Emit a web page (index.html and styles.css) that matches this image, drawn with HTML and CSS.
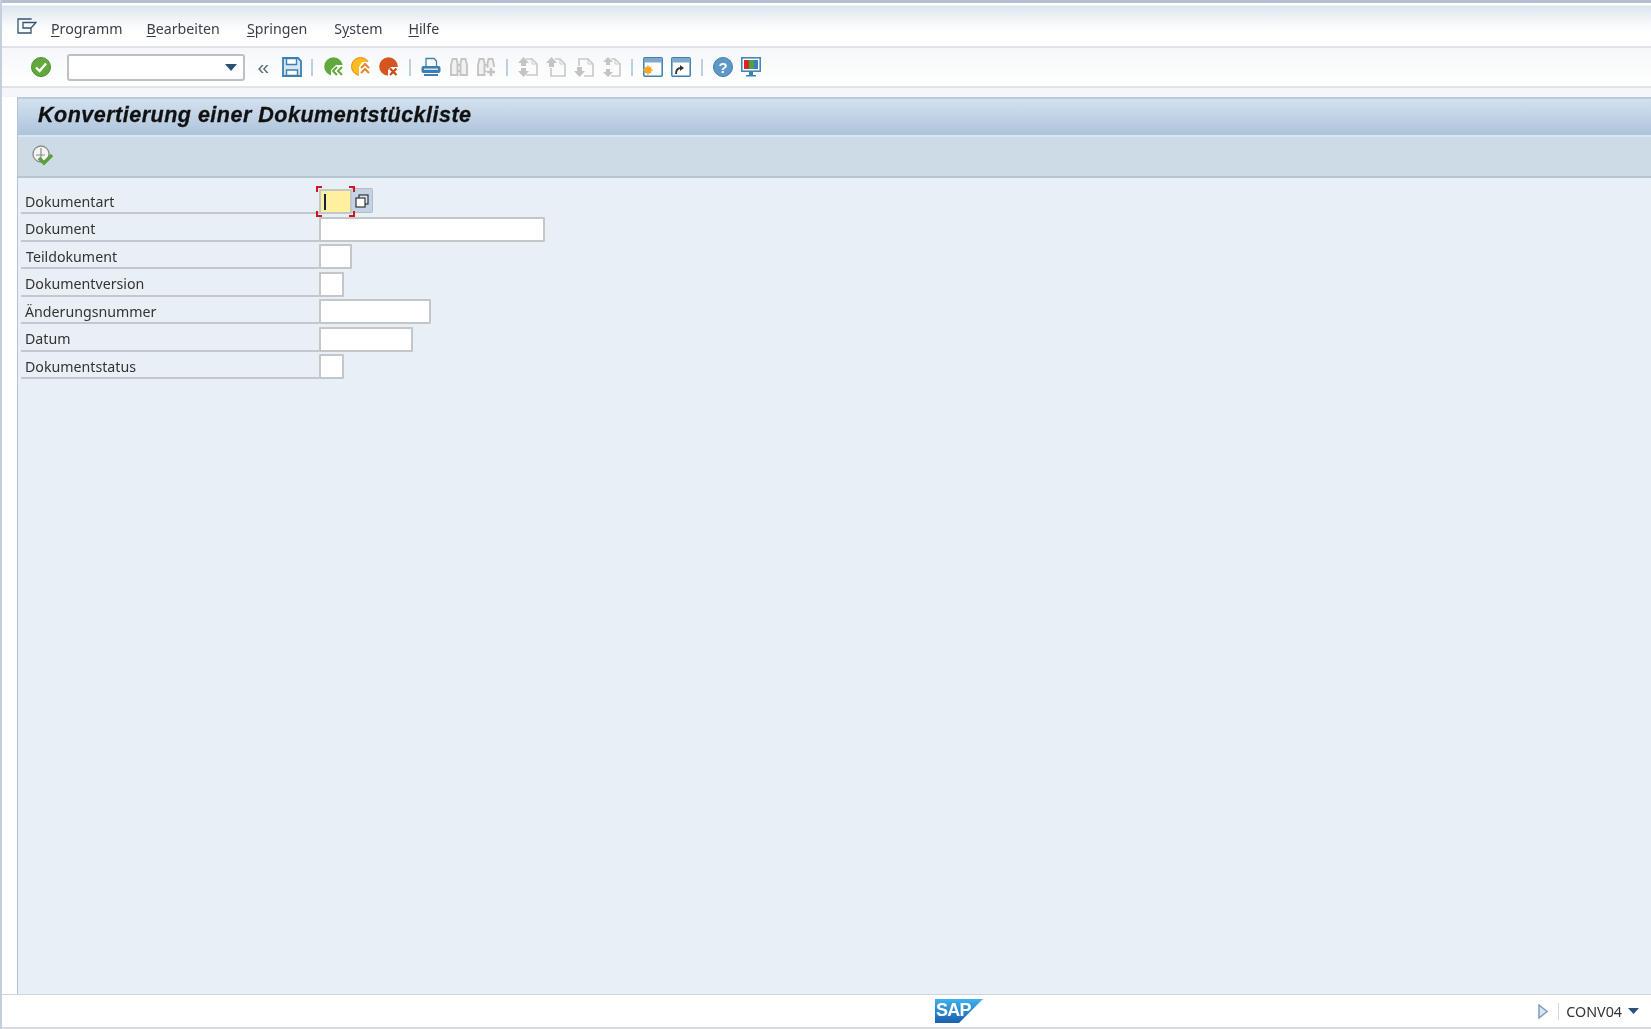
FILE: index.html
```html
<!DOCTYPE html>
<html lang="de">
<head>
<meta charset="utf-8">
<title>Konvertierung einer Dokumentstückliste</title>
<link rel="stylesheet" href="styles.css">
</head>
<body>
<div class="window">
  <header class="menubar">
    <svg class="menu-icon" width="20" height="16" viewBox="0 0 20 16"><path d="M14 1.700V1H1v14h13v-4.500M6 4.500h13l-5 5.500H6z" fill="none" stroke="#35566f" stroke-width="1.300"/></svg>
    <nav class="menu">
      <span class="m1"><u>P</u>rogramm</span>
      <span class="m2"><u>B</u>earbeiten</span>
      <span class="m3"><u>S</u>pringen</span>
      <span class="m4">S<u>y</u>stem</span>
      <span class="m5"><u>H</u>ilfe</span>
    </nav>
  </header>

  <div class="toolbar">
    <svg class="tool" viewBox="0 0 20 20"><circle cx="10" cy="10" r="9.500" fill="#62a83c" stroke="#4c8f30"/><path d="M5 10.500l3.600 3.600L15 6.500" fill="none" stroke="#fff" stroke-width="2.400"/></svg>
    <div class="combo"><svg class="combo-arrow" width="12" height="7" viewBox="0 0 12 7"><path d="M0 0h12L6 7z" fill="#2c4f78"/></svg></div>
    <span class="chev">«</span>
    <svg class="tool" viewBox="0 0 20 20"><path d="M1 1h15l3 3v15H1z" fill="#d6e6f3" stroke="#3d7fb1" stroke-width="1.800"/><path d="M4.500 1.500h10v6h-10z" fill="#fff" stroke="#3d7fb1" stroke-width="1.400"/><path d="M4.500 13h11v5.500h-11z" fill="#fff" stroke="#3d7fb1" stroke-width="1.400"/></svg>
    <i class="sep"></i>
    <svg class="tool" viewBox="0 0 20 20"><circle cx="9.500" cy="9.500" r="9.300" fill="#62a83c"/><path d="M7 20V13l5-5h8v12z" fill="#fff"/><path d="M13 10l-4 4 4 4M18 10l-4 4 4 4" fill="none" stroke="#62a83c" stroke-width="2"/></svg>
    <svg class="tool" viewBox="0 0 20 20"><circle cx="9.500" cy="9.500" r="9" fill="#fbbd1c" stroke="#e8852a"/><path d="M8 20V10l3-5h9v15z" fill="#fff"/><path d="M10 11l4-4 4 4M10 16l4-4 4 4" fill="none" stroke="#e8852a" stroke-width="2"/></svg>
    <svg class="tool" viewBox="0 0 20 20"><circle cx="9.500" cy="9.500" r="9.300" fill="#d4551d"/><path d="M9 20v-7l3-3h8v10z" fill="#fff"/><path d="M11 11.500l6.500 6.500M17.500 11.500L11 18" fill="none" stroke="#c9491a" stroke-width="2.200"/></svg>
    <i class="sep"></i>
    <svg class="tool" viewBox="0 0 20 20"><path d="M5 9V1.500h8l2.500 2.500v5" fill="#fff" stroke="#3d7fb1" stroke-width="1.300"/><rect x="0.500" y="9" width="19" height="7" rx="2" fill="#3d7fb1"/><rect x="3" y="11.500" width="14" height="1.500" fill="#cfe2f1"/><rect x="3" y="17" width="14" height="2" fill="#3d7fb1"/></svg>
    <svg class="tool disabled" viewBox="0 0 20 20"><path d="M2 18V8l1.500-6h4L8.500 6v12zM11.500 18V6l1-4h4L18 8v10zM8.500 8h3M8.500 14h3" fill="#f1f1f1" stroke="#c4c4c4" stroke-width="1.900"/></svg>
    <svg class="tool disabled" viewBox="0 0 20 20"><path d="M2 18V8l1.500-6h4L8.500 6v12zM11.500 11V6l1-4h4L18 8v2M8.500 8h3M8.500 14h2" fill="#f1f1f1" stroke="#c4c4c4" stroke-width="1.900"/><path d="M15 11v8M11 15h8" stroke="#c4c4c4" stroke-width="2.600"/></svg>
    <i class="sep"></i>
    <svg class="tool disabled" viewBox="0 0 20 20"><path d="M8 2h6l5 5v11H8" fill="none" stroke="#c9c9c9" stroke-width="1.600"/><path d="M14 2v5h5" fill="none" stroke="#c9c9c9"/><path d="M5.500 0L11 6H8v3H3V6H0zM5.500 20L11 14H8v-3H3v3H0z" fill="#c4c4c4"/></svg>
    <svg class="tool disabled" viewBox="0 0 20 20"><path d="M9 2h5l5 5v12H5v-8" fill="none" stroke="#c9c9c9" stroke-width="1.600"/><path d="M14 2v5h5" fill="none" stroke="#c9c9c9"/><path d="M5.500 0L11 6H8v4H3V6H0z" fill="#c4c4c4"/></svg>
    <svg class="tool disabled" viewBox="0 0 20 20"><path d="M5 9V2h9l5 5v12h-9" fill="none" stroke="#c9c9c9" stroke-width="1.600"/><path d="M14 2v5h5" fill="none" stroke="#c9c9c9"/><path d="M5.500 20L11 14H8v-4H3v4H0z" fill="#c4c4c4"/></svg>
    <svg class="tool disabled" viewBox="0 0 20 20"><path d="M10 2h4l5 5v12h-9" fill="none" stroke="#c9c9c9" stroke-width="1.600"/><path d="M14 2v5h5" fill="none" stroke="#c9c9c9"/><path d="M7 0L12 5H9v3H5V5H2zM7 20L12 15H9v-3H5v3H2z" fill="#c4c4c4"/></svg>
    <i class="sep"></i>
    <svg class="tool" viewBox="0 0 20 20"><rect x="0.800" y="0.800" width="18.400" height="18.400" rx="1" fill="#fff" stroke="#3d7fb1" stroke-width="1.500"/><rect x="1" y="1" width="18" height="4.500" fill="#7fa9cc"/><circle cx="5" cy="13" r="3.500" fill="#f5a623"/><path d="M5 8v10M0 13h10M1.500 9.500l7 7M8.500 9.500l-7 7" stroke="#f5a623"/></svg>
    <svg class="tool" viewBox="0 0 20 20"><rect x="0.800" y="0.800" width="18.400" height="18.400" rx="1" fill="#fff" stroke="#3d7fb1" stroke-width="1.500"/><rect x="1" y="1" width="18" height="4.500" fill="#7fa9cc"/><path d="M5 17c0-4 1-6 5-6" fill="none" stroke="#333" stroke-width="1.800"/><path d="M9 8l4 3-4 3z" fill="#333"/></svg>
    <i class="sep"></i>
    <svg class="tool" viewBox="0 0 20 20"><circle cx="10" cy="10" r="9.500" fill="#5e97c6" stroke="#3d7fb1"/><text class="help-mark" x="10" y="15.500" text-anchor="middle">?</text></svg>
    <svg class="tool" viewBox="0 0 20 20"><rect x="0.800" y="0.800" width="18.400" height="13.400" fill="#fff" stroke="#3d7fb1" stroke-width="1.500"/><rect x="3" y="3" width="5" height="9" fill="#d8262c"/><rect x="8" y="3" width="5" height="9" fill="#4aa53c"/><rect x="13" y="3" width="4" height="9" fill="#3a7fc1"/><path d="M8 15h4v3h3v1.500H5V18h3z" fill="#3d7fb1"/></svg>
  </div>

  <div class="toolbar-gap"></div>

  <div class="body-row">
    <main class="screen">
      <h1 class="title">Konvertierung einer Dokumentstückliste</h1>
      <div class="app-bar">
        <svg width="22" height="22" viewBox="0 0 22 22"><circle cx="9" cy="9" r="8" fill="#f4f4f4" stroke="#8a8a8a" stroke-width="1.300"/><path d="M9 3v12M4 10h9" stroke="#8a8a8a" stroke-width="1.200"/><path d="M7 13l5 5 8-8" fill="none" stroke="#5aa03a" stroke-width="3.400"/></svg>
      </div>
      <form class="form">
        <div class="row">
          <label class="label">Dokumentart</label>
          <span class="focus-field">
            <input class="field active w-short" type="text" aria-label="Dokumentart" readonly>
            <i class="caret"></i>
            <i class="corner tl"></i><i class="corner tr"></i><i class="corner bl"></i><i class="corner br"></i>
          </span>
          <button class="f4" type="button" aria-label="Werthilfe"><svg width="14" height="14" viewBox="0 0 14 14"><rect x="4" y="1" width="9" height="9" fill="#dfe7ef" stroke="#333" stroke-width="1.200"/><rect x="1" y="4" width="9" height="9" fill="#fff" stroke="#333" stroke-width="1.200"/></svg></button>
        </div>
        <div class="row"><label class="label">Dokument</label><input class="field w-doc" type="text" aria-label="Dokument"></div>
        <div class="row"><label class="label nudge">Teildokument</label><input class="field w-short" type="text" aria-label="Teildokument"></div>
        <div class="row"><label class="label">Dokumentversion</label><input class="field w-tiny" type="text" aria-label="Dokumentversion"></div>
        <div class="row"><label class="label">Änderungsnummer</label><input class="field w-num" type="text" aria-label="Änderungsnummer"></div>
        <div class="row"><label class="label">Datum</label><input class="field w-date" type="text" aria-label="Datum"></div>
        <div class="row"><label class="label">Dokumentstatus</label><input class="field w-tiny" type="text" aria-label="Dokumentstatus"></div>
      </form>
    </main>
  </div>

  <footer class="status">
    <svg class="sap" width="48" height="24" viewBox="0 0 48 24"><defs><linearGradient id="sapg" x1="0" y1="0" x2="0" y2="1"><stop offset="0" stop-color="#3db2ee"/><stop offset="1" stop-color="#1a5fb0"/></linearGradient></defs><path d="M0 0h48L24 24H0z" fill="url(#sapg)"/><text class="sap-text" x="1" y="17">SAP</text></svg>
    <div class="status-right">
      <svg width="10" height="15" viewBox="0 0 10 15"><path d="M1 1l8 6.500L1 14z" fill="#dbe6f1" stroke="#7e9fbd" stroke-width="1.500"/></svg>
      <i class="status-sep"></i>
      <span class="tcode">CONV04</span>
      <svg width="11" height="6" viewBox="0 0 11 6"><path d="M0 0h11L5.500 6z" fill="#2c4f78"/></svg>
    </div>
  </footer>
</div>
</body>
</html>
```

FILE: styles.css
```css
* { box-sizing: border-box; }
html, body { margin: 0; height: 100%; overflow: hidden; }
body { background: #fff; font-family: "Noto Sans", "Liberation Sans", sans-serif; color: #222; }
.window {
  height: 1029px;
  display: flex;
  flex-direction: column;
  border-left: 2px solid #c3cfdc;
  filter: blur(0.4px);
}
.menubar {
  height: 48px;
  flex: none;
  display: flex;
  align-items: flex-start;
  border-top: 3px solid #b4c0cf;
  border-bottom: 2px solid #e0e3e8;
  background: linear-gradient(#fff 0, #fff 2px, #dce5ef 3px, #f8fafc 22px, #fff 32px);
  padding: 15px 0 0 15px;
}
.menu { display: flex; margin-left: 14px; margin-top: 1px; font-size: 14.200px; line-height: 20px; color: #3a3f46; }
.menu span { margin-right: 26px; }
.menu .m1 { margin-right: 24px; }
.menu .m2, .menu .m3 { margin-right: 27px; }
.menu u { text-underline-offset: 2px; }
.toolbar {
  height: 40px;
  flex: none;
  display: flex;
  align-items: center;
  gap: 7.700px;
  padding-left: 29px;
  background: linear-gradient(#f5f7fa, #fff);
  border-bottom: 2px solid #e0e3e8;
}
.tool { width: 20px; height: 20px; flex: none; }
.help-mark { font: bold 15px "Liberation Sans", sans-serif; fill: #fff; }
.sep { width: 6.600px; height: 17px; flex: none; background: linear-gradient(90deg, transparent 2.300px, #bcd0e2 2.300px, #bcd0e2 4.300px, transparent 4.300px); }
.combo {
  width: 178px;
  height: 27px;
  margin-left: 8px;
  flex: none;
  position: relative;
  background: #fff;
  border: 2px solid #bcc0c5;
  border-radius: 3px;
}
.combo-arrow { position: absolute; right: 6px; top: 8px; }
.chev { width: 20px; margin-left: 1px; margin-right: 0.600px; text-align: center; font: 21px/20px "Liberation Sans", sans-serif; color: #5d6b7a; }
.toolbar-gap { height: 9px; flex: none; background: #f4f6f9; }
.body-row { flex: 1; min-height: 0; display: flex; padding-left: 15px; }
.screen {
  flex: 1;
  min-width: 0;
  background: #e8f0f6;
  border-left: 1px solid #b5c5d2;
  display: flex;
  flex-direction: column;
}
.title {
  height: 40px;
  flex: none;
  margin: 0;
  padding: 0 0 4px 20px;
  display: flex;
  align-items: center;
  font: italic bold 21.500px "Liberation Sans", sans-serif;
  letter-spacing: 0.500px;
  -webkit-text-stroke: 0.300px #111;
  color: #111;
  border-top: 2px solid #bcc9d7;
  border-bottom: 2px solid #d9e5ef;
  background: linear-gradient(#d2e1ef, #aec4db);
}
.app-bar {
  height: 41px;
  flex: none;
  display: flex;
  align-items: center;
  padding-left: 14px;
  padding-bottom: 1px;
  background: #cddbe6;
  border-bottom: 2px solid #b5c5d2;
}
.form { display: grid; grid-auto-rows: 27.450px; padding: 9px 0 0 3px; }
.row { display: flex; align-items: flex-end; position: relative; }
.label {
  width: 298px;
  height: 27.450px;
  flex: none;
  padding: 6px 0 0 4px;
  font-size: 14.200px;
  line-height: 18px;
  color: #333;
  border-bottom: 2px solid #c3c8ce;
}
.nudge { padding-left: 5px; }
.field {
  display: block;
  height: 25px;
  padding: 0;
  background: #fff;
  border: 2px solid #c3c6ca;
  border-radius: 1px;
  outline: none;
}
.w-short { width: 33px; }
.w-tiny { width: 25px; }
.w-date { width: 94px; }
.w-num { width: 112px; }
.w-doc { width: 226px; }
.focus-field { position: relative; display: block; }
.field.active { background: #fff0a0; }
.caret { position: absolute; left: 5px; top: 5px; width: 2px; height: 16px; background: #14213d; }
.corner { position: absolute; width: 6px; height: 6px; border: 0 solid #d0161e; }
.tl { left: -3px; top: -3px; border-width: 2px 0 0 2px; }
.tr { right: -3px; top: -3px; border-width: 2px 2px 0 0; }
.bl { left: -3px; bottom: -3px; border-width: 0 0 2px 2px; }
.br { right: -3px; bottom: -3px; border-width: 0 2px 2px 0; }
.f4 {
  width: 21px;
  height: 25px;
  padding: 0;
  margin-left: 0;
  margin-bottom: 1px;
  display: flex;
  align-items: center;
  justify-content: center;
  background: #c3d2e4;
  border: 1px solid #b4bcc6;
  border-left: 0;
  border-radius: 0 2px 2px 0;
}
.status {
  height: 35px;
  flex: none;
  display: flex;
  align-items: center;
  position: relative;
  background: #fff;
  border-top: 1px solid #cdd5dd;
  border-bottom: 2px solid #d8dadd;
}
.sap { position: absolute; left: 933px; top: 4px; }
.sap-text { font: bold 18px "Liberation Sans", sans-serif; letter-spacing: -0.800px; fill: #fff; }
.status-right { margin-left: auto; display: flex; align-items: center; margin-right: 12px; }
.status-sep { width: 1px; height: 17px; margin: 0 7px 0 10px; background: #d3d7dc; }
.tcode { font-size: 14.300px; color: #333; margin-right: 6px; }
```
